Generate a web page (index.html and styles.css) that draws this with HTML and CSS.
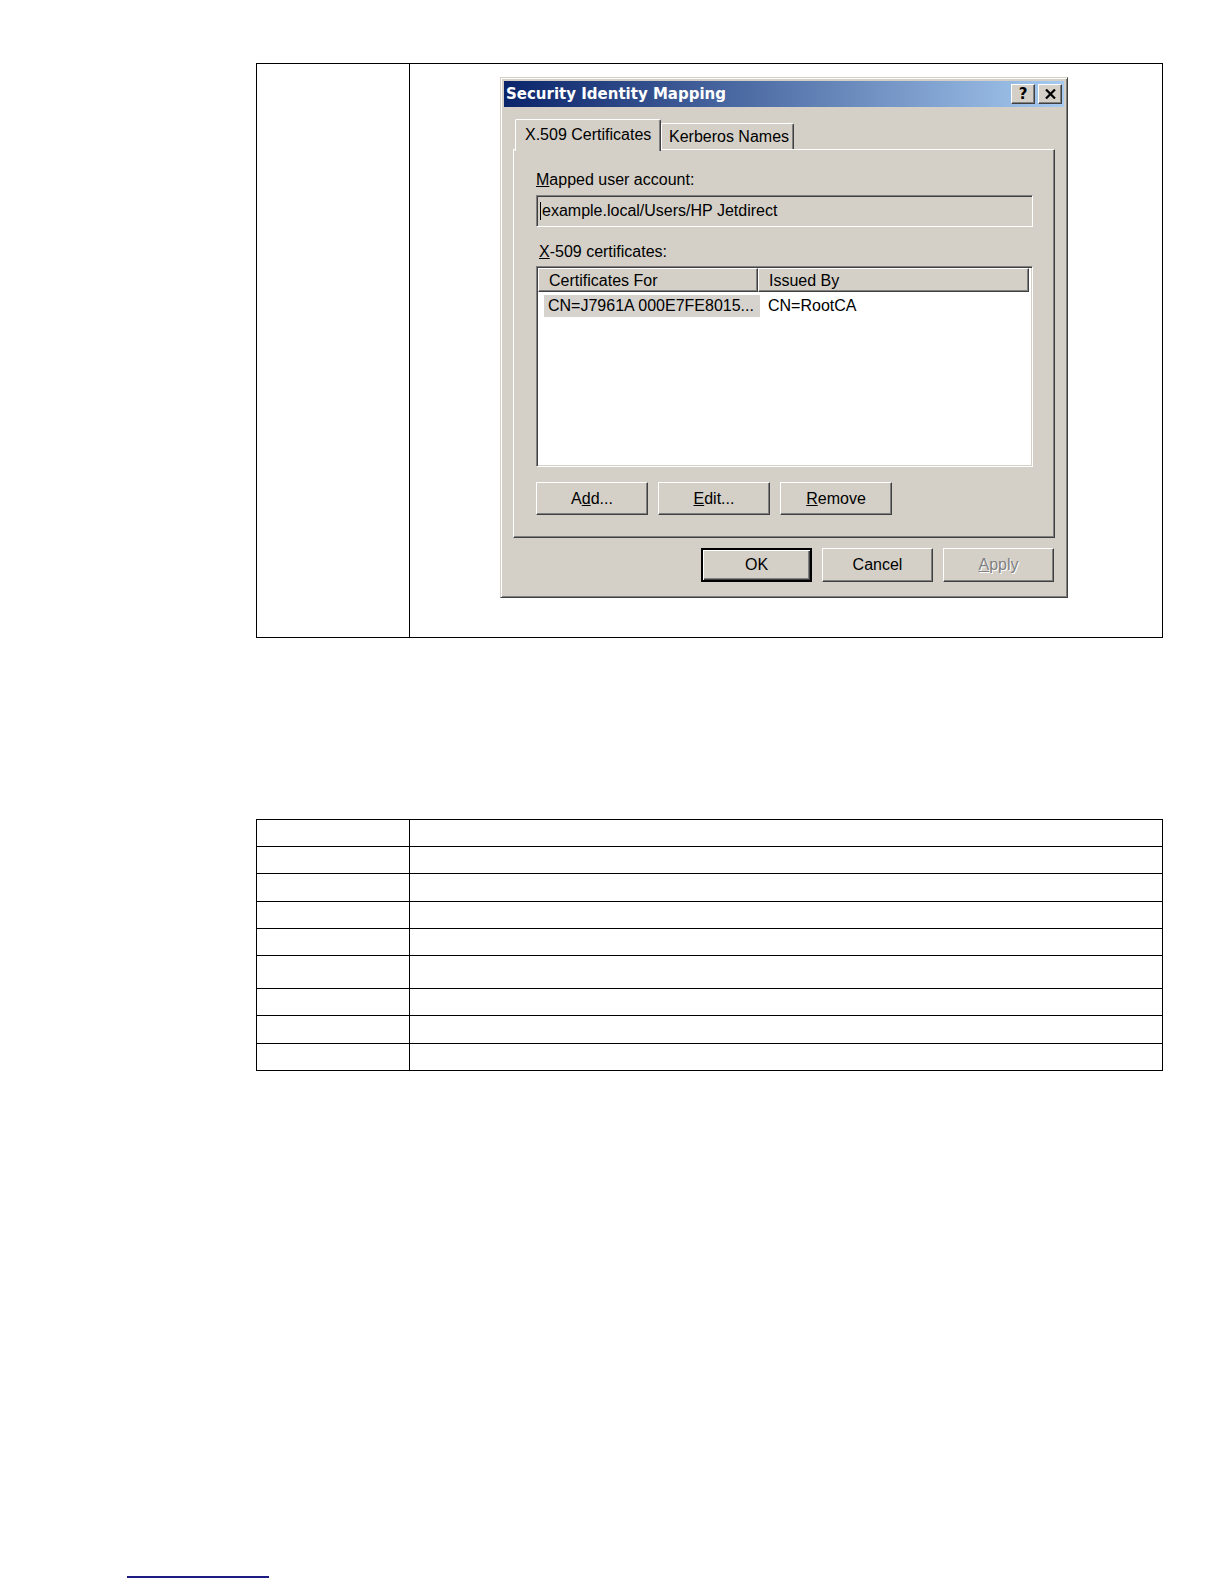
FILE: index.html
```html
<!DOCTYPE html>
<html>
<head>
<meta charset="utf-8">
<title>Security Identity Mapping</title>
<link rel="stylesheet" href="styles.css">
</head>
<body>
<div class="page">
  <table class="doc-table top">
    <tr>
      <td class="c1"></td>
      <td class="c2">
        <div class="dialog">
          <div class="titlebar">
            <span class="title">Security Identity Mapping</span>
            <div class="caption-btns">
              <span class="cbtn help">?</span>
              <span class="cbtn close">
                <svg width="11" height="10" viewBox="0 0 11 10"><path d="M1 0.5 L10 9.5 M10 0.5 L1 9.5" stroke="#000" stroke-width="2.2"/></svg>
              </span>
            </div>
          </div>
          <div class="dlg-body">
            <div class="tabs">
              <div class="tab active">X.509 Certificates</div>
              <div class="tab">Kerberos Names</div>
            </div>
            <div class="panel">
              <div class="label"><u>M</u>apped user account:</div>
              <div class="textbox"><span class="caret"></span>example.local/Users/HP Jetdirect</div>
              <div class="label label2"><u>X</u>-509 certificates:</div>
              <div class="listview">
                <div class="lv-header">
                  <div class="lv-col col1">Certificates For</div>
                  <div class="lv-col col2">Issued By</div>
                </div>
                <div class="lv-row">
                  <div class="lv-cell col1"><span class="sel">CN=J7961A 000E7FE8015...</span></div>
                  <div class="lv-cell col2">CN=RootCA</div>
                </div>
              </div>
              <div class="btn-row">
                <div class="btn">A<u>d</u>d...</div>
                <div class="btn"><u>E</u>dit...</div>
                <div class="btn"><u>R</u>emove</div>
              </div>
            </div>
            <div class="dlg-buttons">
              <div class="btn default">OK</div>
              <div class="btn">Cancel</div>
              <div class="btn disabled"><u>A</u>pply</div>
            </div>
          </div>
        </div>
      </td>
    </tr>
  </table>

  <table class="doc-table bottom">
    <tr><td class="c1"></td><td></td></tr>
    <tr><td class="c1"></td><td></td></tr>
    <tr class="r28"><td class="c1"></td><td></td></tr>
    <tr><td class="c1"></td><td></td></tr>
    <tr><td class="c1"></td><td></td></tr>
    <tr class="tall"><td class="c1"></td><td></td></tr>
    <tr><td class="c1"></td><td></td></tr>
    <tr class="r28"><td class="c1"></td><td></td></tr>
    <tr><td class="c1"></td><td></td></tr>
  </table>

  <div class="rule"></div>
</div>
</body>
</html>
```
FILE: styles.css
```css
body {
  margin: 0;
  background: #fff;
  font-family: "Liberation Sans", Arial, sans-serif;
}

.page {
  padding-top: 63px;
}

.doc-table {
  border-collapse: collapse;
  margin-left: 256px;
  width: 907px;
  table-layout: fixed;
}

.doc-table td {
  border: 1px solid #000;
  padding: 0;
}

.doc-table .c1 {
  width: 152px;
}

.top tr {
  height: 574px;
}

.top td {
  vertical-align: top;
}

.top .c2 {
  padding: 13px 0 0 90px;
}

.bottom {
  margin-top: 181px;
}

.bottom tr {
  height: 27px;
}

.bottom tr.r28 {
  height: 28px;
}

.bottom tr.tall {
  height: 33px;
}

.rule {
  margin: 505px 0 0 127px;
  width: 142px;
  height: 2px;
  background: #1c1c84;
}

/* ---------- dialog ---------- */
.dialog {
  width: 568px;
  height: 521px;
  box-sizing: border-box;
  background: #d4d0c8;
  border: 1px solid;
  border-color: #d4d0c8 #404040 #404040 #d4d0c8;
  box-shadow: inset 1px 1px #fff, inset -1px -1px #808080;
  padding: 3px;
  font-size: 16px;
  color: #000;
}

.titlebar {
  height: 26px;
  display: flex;
  align-items: center;
  justify-content: space-between;
  padding: 0 2px 0 2px;
  background: linear-gradient(to right, #0a246a, #a6caf0);
}

.title {
  color: #fff;
  font-family: "DejaVu Sans", Verdana, sans-serif;
  font-weight: bold;
  font-size: 15px;
}

.caption-btns {
  display: flex;
  gap: 3px;
}

.cbtn {
  width: 24px;
  height: 20px;
  box-sizing: border-box;
  background: #d4d0c8;
  border: 1px solid;
  border-color: #fff #404040 #404040 #fff;
  box-shadow: inset -1px -1px #808080;
  display: flex;
  align-items: center;
  justify-content: center;
  font-weight: bold;
  font-size: 15px;
  font-family: "DejaVu Sans", sans-serif;
  line-height: 1;
}

.dlg-body {
  padding: 12px 9px 0 9px;
}

.tabs {
  display: flex;
  align-items: flex-end;
  height: 32px;
  padding-left: 2px;
  position: relative;
  z-index: 1;
  margin-bottom: -2px;
}

.tab {
  box-sizing: border-box;
  height: 26px;
  margin-bottom: 2px;
  border: 1px solid;
  border-color: #fff #404040 #d4d0c8 #fff;
  border-bottom: none;
  box-shadow: inset -1px 0 #808080;
  border-radius: 2px 2px 0 0;
  background: #d4d0c8;
  padding: 4px 0 0 7px;
  width: 133px;
  font-size: 16px;
}

.tab.active {
  height: 32px;
  margin-bottom: 0;
  width: 146px;
  padding: 6px 0 0 9px;
}

.panel {
  height: 389px;
  box-sizing: border-box;
  border: 1px solid;
  border-color: #fff #404040 #404040 #fff;
  box-shadow: inset -1px -1px #808080;
  padding: 20px 21px 0 22px;
}

.label {
  line-height: 20px;
}

.label2 {
  margin-top: 15px;
  padding-left: 3px;
}

.textbox {
  margin-top: 5px;
  height: 32px;
  box-sizing: border-box;
  border: 1px solid;
  border-color: #808080 #fff #fff #808080;
  box-shadow: inset 1px 1px #404040, inset -1px -1px #d4d0c8;
  background: #d4d0c8;
  display: flex;
  align-items: center;
  padding-left: 3px;
}

.caret {
  width: 1px;
  height: 18px;
  background: #000;
  margin-right: 1px;
}

.listview {
  margin-top: 4px;
  height: 201px;
  box-sizing: border-box;
  border: 1px solid;
  border-color: #808080 #fff #fff #808080;
  box-shadow: inset 1px 1px #404040, inset -1px -1px #d4d0c8;
  background: #fff;
  padding: 1px 3px 0 1px;
}

.lv-header {
  display: flex;
  height: 24px;
}

.lv-col {
  box-sizing: border-box;
  height: 24px;
  background: #d4d0c8;
  border: 1px solid;
  border-color: #fff #404040 #404040 #fff;
  box-shadow: inset -1px -1px #808080;
  padding: 3px 0 0 10px;
}

.col1 {
  width: 220px;
}

.col2 {
  flex: 1;
}

.lv-row {
  display: flex;
  height: 22px;
  margin-top: 3px;
  align-items: stretch;
}

.lv-cell {
  box-sizing: border-box;
  line-height: 22px;
}

.lv-cell.col1 {
  padding-left: 6px;
}

.lv-cell.col2 {
  padding-left: 10px;
}

.sel {
  display: block;
  background: #d6d3ce;
  padding-left: 4px;
  height: 22px;
  margin-right: -2px;
}

.btn-row {
  display: flex;
  gap: 10px;
  margin-top: 15px;
}

.btn {
  width: 112px;
  height: 34px;
  box-sizing: border-box;
  background: #d4d0c8;
  border: 1px solid;
  border-color: #fff #404040 #404040 #fff;
  box-shadow: inset -1px -1px #808080;
  display: flex;
  align-items: center;
  justify-content: center;
}

.btn-row .btn {
  height: 33px;
}

.dlg-buttons {
  display: flex;
  justify-content: flex-end;
  gap: 10px;
  margin-top: 10px;
  padding-right: 1px;
}

.dlg-buttons .btn {
  width: 111px;
}

.btn.default {
  border: 2px solid #000;
  box-shadow: inset 1px 1px #fff, inset -1px -1px #404040, inset -2px -2px #808080;
}

.btn.disabled {
  color: #808080;
  text-shadow: 1px 1px #fff;
}
```
